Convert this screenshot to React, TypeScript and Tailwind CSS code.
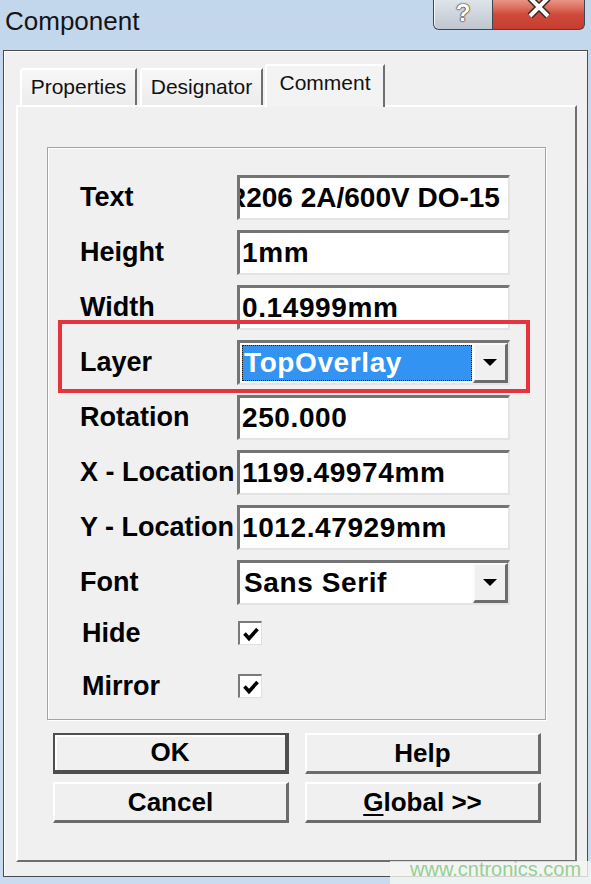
import React from "react";

function Sunken({ children, className = "" }: { children?: React.ReactNode; className?: string }) {
  return (
    <div
      className={
        "flex h-[45px] w-[273px] items-center overflow-hidden bg-white border-t-[3px] border-l-[3px] border-b-2 border-r-2 border-t-[#747474] border-l-[#747474] border-b-[#e4e4e4] border-r-[#e4e4e4] " +
        className
      }
    >
      {children}
    </div>
  );
}

function DropButton() {
  return (
    <div className="flex h-full w-[35px] shrink-0 items-center justify-center bg-[#f0f0f0] border-t-2 border-l-2 border-t-[#fafafa] border-l-[#fafafa] border-b-[3px] border-r-[3px] border-b-[#6c6c6c] border-r-[#6c6c6c]">
      <svg width="14" height="8" viewBox="0 0 14 8">
        <path d="M0 0 L14 0 L7 7 Z" fill="#000" />
      </svg>
    </div>
  );
}

function Row({ label, children }: { label: string; children: React.ReactNode }) {
  return (
    <div className="flex h-[45px] items-center">
      <div className="w-[189px] shrink-0 whitespace-nowrap pl-[32px] text-[27px] font-bold text-black">{label}</div>
      {children}
    </div>
  );
}

function Value({ children, className = "" }: { children: React.ReactNode; className?: string }) {
  return (
    <span className={"shrink-0 whitespace-nowrap pl-[2px] text-[28px] font-bold leading-none tracking-[0.6px] text-black " + className}>
      {children}
    </span>
  );
}

function Check() {
  return (
    <div className="ml-[1px] flex h-[24px] w-[24px] items-center justify-center bg-white border-t-2 border-l-2 border-t-[#7a7a7a] border-l-[#7a7a7a] border-b border-r border-b-[#e0e0e0] border-r-[#e0e0e0]">
      <svg width="18" height="16" viewBox="0 0 18 16">
        <path d="M2.5 7.5 L7 12.5 L15.5 3" fill="none" stroke="#000" strokeWidth="3.6" />
      </svg>
    </div>
  );
}

function Btn({ children, primary = false }: { children: React.ReactNode; primary?: boolean }) {
  return (
    <div
      className={
        "flex h-[41px] w-[236px] items-center justify-center bg-[#f0f0f0] text-[26px] font-bold text-black " +
        (primary
          ? "border-2 border-b-4 border-r-4 border-[#4e4e4e] shadow-[inset_2px_2px_0_#ffffff]"
          : "border-t-2 border-l-2 border-t-white border-l-white border-b-[3px] border-r-[3px] border-b-[#6b6b6b] border-r-[#6b6b6b]")
      }
    >
      {children}
    </div>
  );
}

function Tab({ label, active = false, width }: { label: string; active?: boolean; width: string }) {
  return (
    <div
      className={
        "flex items-center justify-center rounded-tl-[3px] border-t-2 border-l-2 border-r-2 border-t-white border-l-white border-r-[#6e6e6e] text-[21px] text-[#111] " +
        width +
        (active
          ? " relative z-10 -mb-[2px] h-[43px] bg-[#f3f3f3] pb-[8px]"
          : " h-[37px] bg-gradient-to-b from-[#f7f7f7] to-[#ececec] pb-[2px]")
      }
    >
      {label}
    </div>
  );
}

export default function App() {
  return (
    <div className="relative h-[884px] w-[591px] overflow-hidden bg-gradient-to-b from-[#c2d6ec] via-[#d3e2f2] to-[#c9dbef] font-['Liberation_Sans',Arial,sans-serif]">
      {/* title bar */}
      <div className="flex h-[50px] items-start">
        <div className="pl-[5px] pt-[2px] text-[26px] text-[#141414]">Component</div>
        <div className="ml-auto mr-[6px] flex">
          <div className="flex h-[30px] w-[60px] items-start justify-center rounded-bl-[6px] border border-t-0 border-[#3e4650] bg-gradient-to-b from-[#dfe4ea] to-[#bfc6cf] shadow-[inset_1px_0_0_#f4f6f8]">
            <span className="-mt-[5px] text-[24px] font-bold text-white [text-shadow:0_0_1px_#2a2a2a,0_0_1px_#2a2a2a,0_0_2px_#2a2a2a]">?</span>
          </div>
          <div className="flex h-[30px] w-[92px] items-start justify-center rounded-br-[6px] border border-l-0 border-t-0 border-[#3e4650] bg-gradient-to-b from-[#e89586] via-[#d0493b] to-[#c43d2e]">
            <svg width="24" height="20" viewBox="0 0 24 20" className="-mt-[2px]">
              <path d="M3 0 L21 18 M21 0 L3 18" stroke="#3a2420" strokeWidth="7" />
              <path d="M3 0 L21 18 M21 0 L3 18" stroke="#ffffff" strokeWidth="4" />
            </svg>
          </div>
        </div>
      </div>

      {/* window body */}
      <div className="ml-[3px] h-[827px] w-[585px] border border-[#4c4c4c] bg-[#f0f0f0] shadow-[inset_1px_1px_0_#ffffff]">
        <div className="ml-[12px] mt-[13px] flex h-[41px] items-end">
          <div className="ml-[4px]">
            <Tab label="Properties" width="w-[117px]" />
          </div>
          <div className="ml-[3px]">
            <Tab label="Designator" width="w-[123px]" />
          </div>
          <div className="ml-[2px]">
            <Tab label="Comment" width="w-[120px]" active />
          </div>
        </div>

        <div className="ml-[12px] w-[561px] border-2 border-t-white border-l-white border-b-[#6e6e6e] border-r-[#6e6e6e] bg-[#f0f0f0] pl-[29px] pt-[40px] pb-[37px]">
          {/* group box */}
          <div className="flex h-[573px] w-[499px] flex-col border border-[#a3a3a3] pt-[27px] pb-[12px] shadow-[inset_1px_1px_0_#ffffff,1px_1px_0_#ffffff]">
            <div className="flex flex-col gap-[10px]">
              <Row label="Text">
                <Sunken>
                  <Value className="-ml-[16px] !tracking-[0px]">R206 2A/600V DO-15</Value>
                </Sunken>
              </Row>
              <Row label="Height">
                <Sunken>
                  <Value>1mm</Value>
                </Sunken>
              </Row>
              <Row label="Width">
                <Sunken>
                  <Value>0.14999mm</Value>
                </Sunken>
              </Row>
              <div className="relative">
                <div className="pointer-events-none absolute -top-[20px] left-[10px] h-[73px] w-[472px] border-4 border-[#e5343b]" />
                <Row label="Layer">
                  <Sunken className="!items-stretch">
                    <div className="my-[2px] ml-[2px] mr-[1px] flex flex-1 items-center border border-dotted border-[#1a1a1a] bg-[#3393f2]">
                      <span className="pl-[1px] text-[28px] font-bold leading-none tracking-[0.6px] text-white">TopOverlay</span>
                    </div>
                    <DropButton />
                  </Sunken>
                </Row>
              </div>
              <Row label="Rotation">
                <Sunken>
                  <Value>250.000</Value>
                </Sunken>
              </Row>
              <Row label="X - Location">
                <Sunken>
                  <Value>1199.49974mm</Value>
                </Sunken>
              </Row>
              <Row label="Y - Location">
                <Sunken>
                  <Value>1012.47929mm</Value>
                </Sunken>
              </Row>
              <Row label="Font">
                <Sunken className="!items-stretch">
                  <div className="flex flex-1 items-center">
                    <Value className="pl-[4px]">Sans Serif</Value>
                  </div>
                  <DropButton />
                </Sunken>
              </Row>
            </div>
            <div className="mt-[7px] flex h-[42px] items-center">
              <div className="w-[189px] shrink-0 pl-[34px] text-[27px] font-bold text-black">Hide</div>
              <Check />
            </div>
            <div className="mt-[11px] flex h-[42px] items-center">
              <div className="w-[189px] shrink-0 pl-[34px] text-[27px] font-bold text-black">Mirror</div>
              <Check />
            </div>
          </div>

          {/* buttons */}
          <div className="mt-[13px] grid w-[494px] grid-cols-2 gap-x-[16px] gap-y-[8px] pl-[6px]">
            <Btn primary>OK</Btn>
            <Btn>Help</Btn>
            <Btn>Cancel</Btn>
            <Btn>
              <span>
                <span className="underline decoration-2 underline-offset-[3px]">G</span>lobal &gt;&gt;
              </span>
            </Btn>
          </div>
        </div>
      </div>

      {/* watermark */}
      <div className="absolute left-[390px] top-[861px] h-[23px] w-[201px] bg-[#f5f6f3]/80" />
      <div className="absolute left-[410px] top-[857px] text-[20px] leading-[24px] text-[#95cf95]">www.cntronics.com</div>
    </div>
  );
}
